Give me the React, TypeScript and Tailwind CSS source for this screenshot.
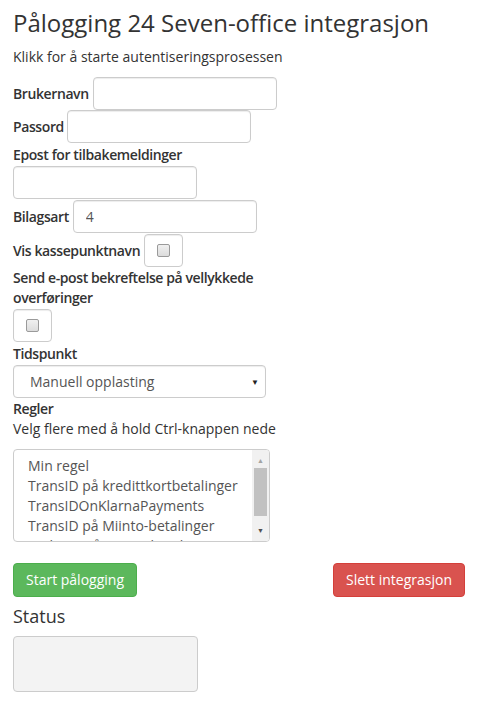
import React from "react";

const inputCls =
  "w-[184px] h-[33px] rounded-[4px] border border-[#ccc] bg-white px-3 text-[14px] text-[#555] shadow-[inset_0_1px_1px_rgba(0,0,0,0.075)] outline-none";

const labelCls = "font-semibold tracking-[-0.4px]";

const CheckBox = () => (
  <div className="w-[39px] h-[33px] rounded-[4px] border border-[#ccc] bg-white flex items-center justify-center shadow-[inset_0_1px_1px_rgba(0,0,0,0.075)]">
    <span className="w-[13px] h-[13px] rounded-[2px] border border-[#9a9a9a] bg-gradient-to-b from-[#f0f0f0] to-[#dcdcdc]" />
  </div>
);

const rules = [
  "Min regel",
  "TransID på kredittkortbetalinger",
  "TransIDOnKlarnaPayments",
  "TransID på Miinto-betalinger",
  "OrderID på Miinto-betalinger",
];

export default function App() {
  return (
    <div className="min-h-[713px] bg-white pl-[13px] pr-[14px] pt-[10px] font-['Open_Sans',sans-serif] text-[14px] leading-[20px] text-[#333]">
      {/* HEADER */}
      <h3 className="text-[24px] leading-[26px] font-normal">
        Pålogging 24 Seven-office integrasjon
      </h3>
      <p className="mt-[11px]">Klikk for å starte autentiseringsprosessen</p>

      {/* FORM */}
      <div className="mt-[10px] flex flex-col">
        <div className="flex items-center gap-1">
          <label className={labelCls}>Brukernavn</label>
          <input className={inputCls} type="text" />
        </div>
        <div className="flex items-center gap-[3px]">
          <label className={labelCls}>Passord</label>
          <input className={inputCls} type="password" />
        </div>
        <label className={`mt-[2px] ${labelCls}`}>Epost for tilbakemeldinger</label>
        <input className={`${inputCls} mt-[1px]`} type="text" />
        <div className="mt-[1px] flex items-center gap-1">
          <label className={labelCls}>Bilagsart</label>
          <input className={inputCls} type="text" defaultValue="4" />
        </div>
        <div className="mt-[1px] flex items-center gap-1">
          <label className={labelCls}>Vis kassepunktnavn</label>
          <CheckBox />
        </div>
        <label className={`mt-[1px] w-[300px] ${labelCls}`}>
          Send e-post bekreftelse på vellykkede overføringer
        </label>
        <div className="mt-[1px]">
          <CheckBox />
        </div>

        <label className={`mt-[2px] ${labelCls}`}>Tidspunkt</label>
        <div className="relative mt-[1px] w-[253px] h-[33px] rounded-[4px] border border-[#ccc] bg-white flex items-center pl-[16px] text-[#555] shadow-[inset_0_1px_1px_rgba(0,0,0,0.075)]">
          Manuell opplasting
          <span className="absolute right-[6px] top-[6px] text-[8px] leading-[20px] text-[#222]">▼</span>
        </div>

        <label className={`mt-[1px] ${labelCls}`}>Regler</label>
        <p>Velg flere med å hold Ctrl-knappen nede</p>

        <div className="mt-[10px] flex w-[257px] h-[93px] overflow-hidden rounded-[4px] border border-[#ccc] bg-white text-[#555]">
          <div className="flex-1 pl-[14px] pt-[6px]">
            {rules.map((r) => (
              <div key={r} className="whitespace-nowrap">
                {r}
              </div>
            ))}
          </div>
          <div className="w-[17px] bg-[#f1f1f1] flex flex-col items-center">
            <span className="mt-[5px] h-[12px] text-[7px] leading-[12px] text-[#a3a3a3]">▲</span>
            <span className="mt-[1px] w-[13px] h-[48px] bg-[#c1c1c1]" />
            <span className="flex-1" />
            <span className="mb-[4px] h-[12px] text-[7px] leading-[12px] text-[#505050]">▼</span>
          </div>
        </div>

        {/* BUTTONS */}
        <div className="mt-[21px] flex justify-between">
          <button
            type="button"
            className="w-[124px] h-[34px] rounded-[4px] border border-[#4cae4c] bg-[#5cb85c] text-white">
            Start pålogging
          </button>
          <button
            type="button"
            className="w-[132px] h-[34px] rounded-[4px] border border-[#d43f3a] bg-[#d9534f] text-white">
            Slett integrasjon
          </button>
        </div>

        {/* STATUS */}
        <h4 className="mt-[9px] text-[18px] leading-[20px]">Status</h4>
        <div className="mt-[10px] w-[185px] h-[56px] rounded-[4px] border border-[#ccc] bg-[#f3f3f3]" />
      </div>
    </div>
  );
}
